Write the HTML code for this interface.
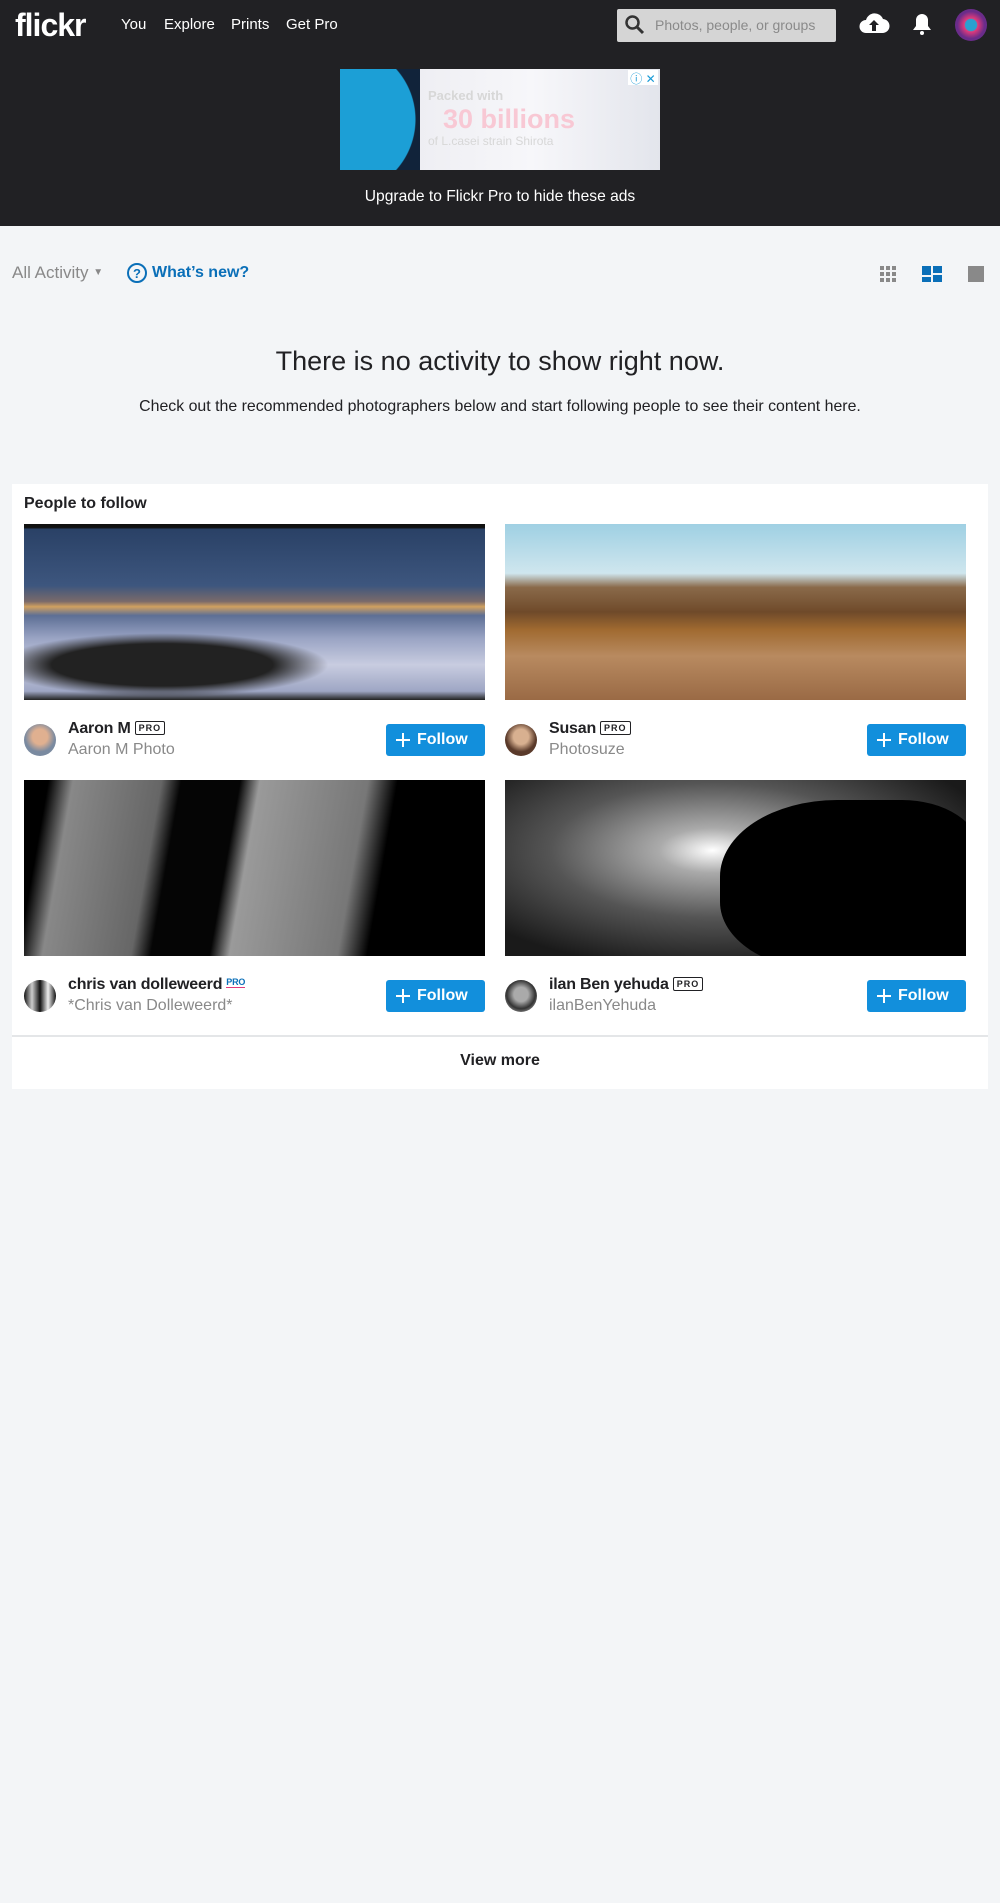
<!DOCTYPE html>
<html><head><meta charset="utf-8"><style>
*{box-sizing:border-box;margin:0;padding:0}
body{width:1000px;height:1903px;background:#f3f5f7;font-family:"Liberation Sans",sans-serif;position:relative;overflow:hidden}
.abs{position:absolute}
#hdr{left:0;top:0;width:1000px;height:226px;background:#212124}
.nav{color:#fff;font-size:15px;top:16px}
.img{position:absolute;overflow:hidden}
.av{position:absolute;width:32px;height:32px;border-radius:50%}
.nm{position:absolute;font-size:16px;font-weight:bold;color:#212124;letter-spacing:-0.2px}
.sub{position:absolute;font-size:16px;color:#898989}
.pro{display:inline-block;border:1px solid #212124;border-radius:2px;font-size:9px;padding:1px 3px;margin-left:4px;vertical-align:2px;letter-spacing:1px}
.fb{position:absolute;width:99px;height:32px;background:#128fdc;border-radius:3px;color:#fff;font-size:16px;font-weight:bold;line-height:32px;padding-left:31px}
.fb:before{content:"";position:absolute;left:10px;width:14px;height:2px;background:#fff;top:15px}
.fb:after{content:"";position:absolute;left:16px;top:9px;width:2px;height:14px;background:#fff}
</style></head><body>
<div id="hdr" class="abs"></div>
<div class="abs" style="left:15px;top:7px;color:#fff;font-size:32px;font-weight:bold;letter-spacing:-1px">flickr</div>
<div class="abs nav" style="left:121px">You</div>
<div class="abs nav" style="left:164px">Explore</div>
<div class="abs nav" style="left:231px">Prints</div>
<div class="abs nav" style="left:286px">Get Pro</div>
<div class="abs" style="left:617px;top:9px;width:219px;height:33px;background:#d5d5d5;border-radius:2px"></div>
<svg class="abs" style="left:624px;top:14px" width="22" height="22" viewBox="0 0 22 22"><circle cx="8.5" cy="8.5" r="6" fill="none" stroke="#333" stroke-width="2.5"/><path d="M13 13l6 6" stroke="#333" stroke-width="3"/></svg>
<div class="abs" style="left:655px;top:17px;color:#8a8a8a;font-size:14px">Photos, people, or groups</div>
<svg class="abs" style="left:858px;top:11px" width="32" height="24" viewBox="0 0 32 24"><path d="M8 22h16a7 7 0 0 0 1-14 9 9 0 0 0-17 1 6.5 6.5 0 0 0 0 13z" fill="#fff"/><path d="M16 9l-5 5h3v6h4v-6h3z" fill="#212124"/></svg>
<svg class="abs" style="left:911px;top:12px" width="22" height="24" viewBox="0 0 22 24"><path d="M11 2a6 6 0 0 0-6 6v6l-3 4h18l-3-4V8a6 6 0 0 0-6-6z" fill="#fff"/><circle cx="11" cy="21" r="2" fill="#fff"/></svg>
<div class="abs" style="left:955px;top:9px;width:32px;height:32px;border-radius:50%;background:radial-gradient(circle,#2aa0d0 0 25%,#e23a7a 30%,#6a2c8a 60%)"></div>
<div class="abs" style="left:340px;top:69px;width:320px;height:101px;background:linear-gradient(90deg,#e8e8ee,#f7f7fa 60%,#e3e5ec)"></div>
<div class="abs" style="left:340px;top:69px;width:80px;height:101px;background:radial-gradient(circle at 0 50%,#1c9fd6 0 75px,transparent 76px),#11233a"></div>
<div class="abs" style="left:428px;top:88px;color:#d7d7d7;font-size:13px;font-weight:bold">Packed with</div>
<div class="abs" style="left:443px;top:104px;color:#f8c8d4;font-size:27px;font-weight:bold">30 billions</div>
<div class="abs" style="left:428px;top:134px;color:#d7d7d7;font-size:12px">of L.casei strain Shirota</div>
<div class="abs" style="left:628px;top:70px;width:30px;height:15px;background:#fff;color:#1a9bd6;font-size:12px;text-align:center">ⓘ ✕</div>
<div class="abs" style="left:0;top:188px;width:1000px;text-align:center;color:#fff;font-size:15.6px">Upgrade to Flickr Pro to hide these ads</div>

<div class="abs" style="left:12px;top:263px;color:#898989;font-size:17px">All Activity <span style="font-size:10px;vertical-align:3px">▼</span></div>
<div class="abs" style="left:127px;top:263px;width:20px;height:20px;border:2px solid #0a6fb8;border-radius:50%;color:#0a6fb8;font-size:13px;font-weight:bold;text-align:center;line-height:17px">?</div>
<div class="abs" style="left:152px;top:264px;color:#0a6fb8;font-size:16px;font-weight:bold">What’s new?</div>
<svg class="abs" style="left:880px;top:266px" width="16" height="16"><g fill="#898989"><rect x="0" y="0" width="4" height="4"/><rect x="6" y="0" width="4" height="4"/><rect x="12" y="0" width="4" height="4"/><rect x="0" y="6" width="4" height="4"/><rect x="6" y="6" width="4" height="4"/><rect x="12" y="6" width="4" height="4"/><rect x="0" y="12" width="4" height="4"/><rect x="6" y="12" width="4" height="4"/><rect x="12" y="12" width="4" height="4"/></g></svg>
<svg class="abs" style="left:922px;top:266px" width="20" height="16"><g fill="#0a6fb8"><rect x="0" y="0" width="9" height="9"/><rect x="11" y="0" width="9" height="7"/><rect x="0" y="11" width="9" height="5"/><rect x="11" y="9" width="9" height="7"/></g></svg>
<div class="abs" style="left:968px;top:266px;width:16px;height:16px;background:#898989"></div>

<div class="abs" style="left:0;top:346px;width:1000px;text-align:center;color:#212124;font-size:27px;font-weight:300">There is no activity to show right now.</div>
<div class="abs" style="left:0;top:398px;width:1000px;text-align:center;color:#212124;font-size:15.9px">Check out the recommended photographers below and start following people to see their content here.</div>

<div class="abs" style="left:12px;top:484px;width:976px;height:605px;background:#fff"></div>
<div class="abs" style="left:24px;top:495px;font-size:16px;font-weight:bold;color:#212124">People to follow</div>
<div class="img" style="left:24px;top:524px;width:461px;height:176px;background:radial-gradient(ellipse 60% 30% at 30% 80%,#222 0 40%,transparent 60%),linear-gradient(180deg,#111 0 2%,#2a4166 3%,#3d567e 35%,#7a6a6a 44%,#d0a060 47%,#5d6f95 52%,#9aa4c4 65%,#c8cce0 80%,#9ea6c4 95%,#222 100%)"></div>
<div class="img" style="left:505px;top:524px;width:461px;height:176px;background:linear-gradient(180deg,#9fd0e3 0,#cfe6ee 28%,#8a6a4a 36%,#6f4a2a 50%,#a06a30 60%,#b88a60 75%,#9a6a45 100%)"></div>
<div class="img" style="left:24px;top:780px;width:461px;height:176px;background:linear-gradient(100deg,#000 0 5%,#888 10%,#666 28%,#050505 32% 44%,#9a9a9a 48%,#777 70%,#000 76%)"></div>
<div class="img" style="left:505px;top:780px;width:461px;height:176px;background:radial-gradient(ellipse at 45% 40%,#fff 0,#aaa 15%,#555 45%,#1a1a1a 80%)"><div style="position:absolute;left:215px;top:20px;width:260px;height:170px;background:#000;border-radius:45% 30% 0 40%"></div></div>

<div class="av" style="left:24px;top:724px;background:radial-gradient(circle at 50% 40%,#e0b090 0 30%,#7a8aa0 60%)"></div>
<div class="nm" style="left:68px;top:720px">Aaron M<span class="pro">PRO</span></div>
<div class="sub" style="left:68px;top:741px">Aaron M Photo</div>
<div class="fb" style="left:386px;top:724px">Follow</div>
<div class="av" style="left:505px;top:724px;background:radial-gradient(circle at 50% 40%,#d8b090 0 30%,#5a3a2a 60%)"></div>
<div class="nm" style="left:549px;top:720px">Susan<span class="pro">PRO</span></div>
<div class="sub" style="left:549px;top:741px">Photosuze</div>
<div class="fb" style="left:867px;top:724px">Follow</div>

<div class="av" style="left:24px;top:980px;background:linear-gradient(90deg,#111,#ccc,#111,#eee,#111)"></div>
<div class="nm" style="left:68px;top:976px">chris van dolleweerd<span style="font-size:9px;color:#0a6fb8;margin-left:4px;vertical-align:4px;border-bottom:1px solid #e23a7a">PRO</span></div>
<div class="sub" style="left:68px;top:997px">*Chris van Dolleweerd*</div>
<div class="fb" style="left:386px;top:980px">Follow</div>
<div class="av" style="left:505px;top:980px;background:radial-gradient(circle at 50% 45%,#aaa 0 30%,#333 60%,#ddd)"></div>
<div class="nm" style="left:549px;top:976px">ilan Ben yehuda<span class="pro">PRO</span></div>
<div class="sub" style="left:549px;top:997px">ilanBenYehuda</div>
<div class="fb" style="left:867px;top:980px">Follow</div>

<div class="abs" style="left:12px;top:1035px;width:976px;height:2px;background:#e4e6e8"></div>
<div class="abs" style="left:0;top:1052px;width:1000px;text-align:center;font-size:16px;font-weight:bold;color:#212124">View more</div>
</body></html>
